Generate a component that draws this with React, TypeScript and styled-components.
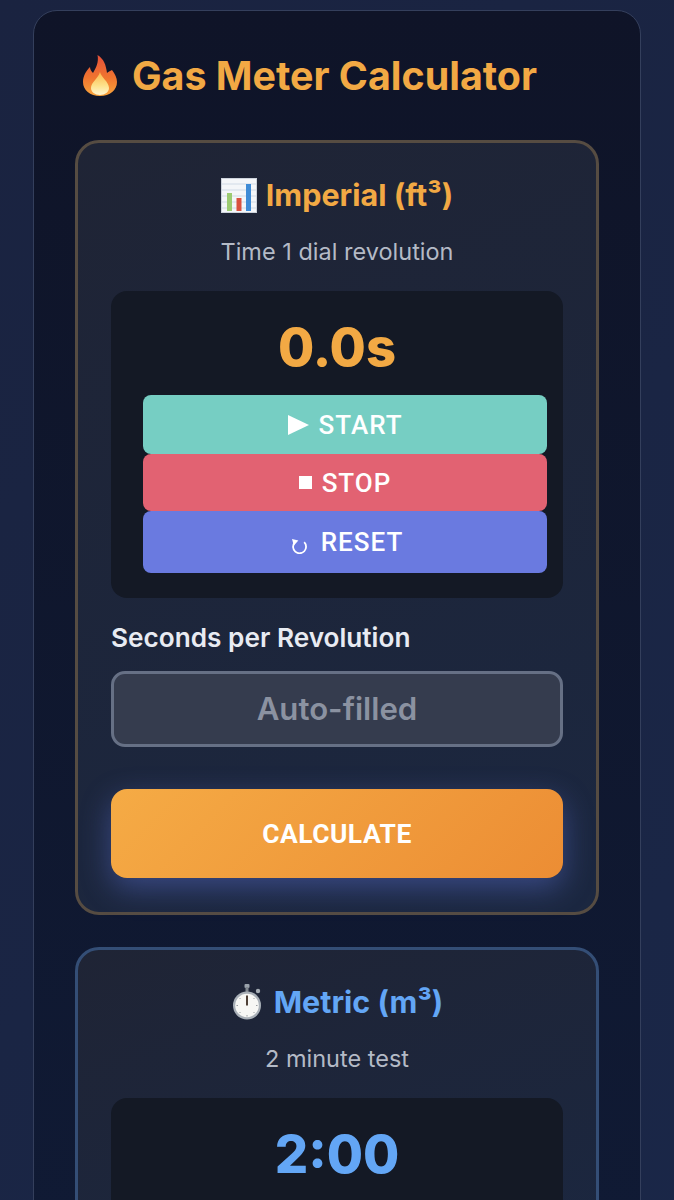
import styled, { createGlobalStyle } from "styled-components";

const GlobalStyle = createGlobalStyle`
  * { box-sizing: border-box; }
  html, body { margin: 0; padding: 0; background: #1a2544; }
  body { font-family: Inter, "Liberation Sans", sans-serif; }
  #root { height: 1200px; overflow: hidden; }
`;

const FireEmoji = () => (
  <svg width="42" height="46" viewBox="0 0 42 46">
    <defs>
      <linearGradient id="fireOuter" x1="0" y1="0" x2="0" y2="1">
        <stop offset="0" stopColor="#e4503a" />
        <stop offset="0.55" stopColor="#f0742f" />
        <stop offset="1" stopColor="#f8a53c" />
      </linearGradient>
      <linearGradient id="fireInner" x1="0" y1="0" x2="0" y2="1">
        <stop offset="0" stopColor="#fbb64a" />
        <stop offset="0.6" stopColor="#fde28c" />
        <stop offset="1" stopColor="#fff6d2" />
      </linearGradient>
    </defs>
    <path d="M20.5 2C27 6 29 12 30 20C31 19 33 18 35 17C38 21 40 25 40 29C40 37 33 43 23 43C13 43 6 37 6 29C6 23 9 18 13 14C13 16 14 18 16 20C19 15 22 9 20.5 2z" fill="url(#fireOuter)" />
    <path d="M23 19C24 24 32 29 32 35C32 39 28 42 23 42C18 42 14 39 14 35C14 29 21 26 23 19z" fill="url(#fireInner)" />
  </svg>
);

const ChartEmoji = () => (
  <svg width="36" height="35" viewBox="0 0 36 35">
    <rect x="0.5" y="0.5" width="35" height="34" fill="#f4f6f9" stroke="#cdd3dc" />
    <path d="M1 6h34M1 12h34M1 18h34M1 24h34M1 30h34" stroke="#d0dae6" strokeWidth="1" />
    <rect x="6" y="15" width="5" height="18" fill="#9ccb72" />
    <rect x="15.5" y="20" width="5" height="13" fill="#d9503f" />
    <rect x="25" y="6" width="5" height="27" fill="#3f8bd6" />
  </svg>
);

const WatchEmoji = () => (
  <svg width="32" height="36" viewBox="0 0 32 36">
    <rect x="13.5" y="0" width="5" height="4" rx="1" fill="#9aa2ab" />
    <rect x="14.5" y="3" width="3" height="5" fill="#80878f" />
    <circle cx="27" cy="7" r="2.2" fill="#a5acb4" />
    <circle cx="16" cy="21.5" r="14" fill="#a9b0b8" />
    <circle cx="16" cy="21.5" r="11.8" fill="#f7f7f5" />
    <path d="M16 11.5v10" stroke="#4f4037" strokeWidth="2" />
    <path d="M16 31v1.5M5.5 21.5h1.5M25 21.5h1.5M8.5 14l1 1M22.5 28l1 1M23.5 14l-1 1M9.5 28l-1 1" stroke="#8d9299" strokeWidth="0.9" />
  </svg>
);

const PlayIcon = () => (
  <svg width="21" height="20" viewBox="0 0 21 20">
    <path d="M0 0l21 10L0 20z" fill="#fff" />
  </svg>
);

const StopIcon = () => (
  <svg width="13" height="13" viewBox="0 0 13 13">
    <rect width="13" height="13" fill="#fff" />
  </svg>
);

const ResetIcon = () => (
  <ResetSvg width="17" height="16" viewBox="0 0 17 16">
    <path d="M3.6 4.6a6.5 6.5 0 1 0 9.6-.4" fill="none" stroke="#fff" strokeWidth="1.8" />
    <path d="M1 1l6.4 1.6L2.8 7.4z" fill="#fff" />
  </ResetSvg>
);

const App = () => (
  <Page>
    <GlobalStyle />
    <Shell>
      <Heading>
        <FireEmoji />
        Gas Meter Calculator
      </Heading>

      <Section $border="#564c42">
        <SectionTitle $color="#f2a944" $gap={9}>
          <ChartEmoji />
          Imperial (ft³)
        </SectionTitle>
        <Hint>Time 1 dial revolution</Hint>
        <TimerBox>
          <TimerValue $color="#f2a944">0.0s</TimerValue>
          <ButtonStack>
            <TimerButton $bg="#76cec3" $height={59} $gap={10}><PlayIcon />START</TimerButton>
            <TimerButton $bg="#e26272" $height={57} $gap={10}><StopIcon />STOP</TimerButton>
            <TimerButton $bg="#6a7ae0" $height={62} $gap={13} $offset={4}><ResetIcon />RESET</TimerButton>
          </ButtonStack>
        </TimerBox>
        <FieldLabel>Seconds per Revolution</FieldLabel>
        <AutoInput readOnly placeholder="Auto-filled" />
        <CalcButton>CALCULATE</CalcButton>
      </Section>

      <Section $border="#344e76">
        <SectionTitle $color="#63a6f5" $gap={11}>
          <WatchEmoji />
          Metric (m³)
        </SectionTitle>
        <Hint>2 minute test</Hint>
        <TimerBox>
          <TimerValue $color="#63a6f5">2:00</TimerValue>
        </TimerBox>
      </Section>
    </Shell>
  </Page>
);

export default App;

const Page = styled.div`
  min-height: 1200px;
  padding: 10px 33px 0;
  background: linear-gradient(135deg, #1a2340 0%, #1a2748 100%);
`;

const Shell = styled.main`
  height: 1400px;
  padding: 41px 41px 0;
  border: 1px solid #343f5c;
  border-radius: 24px;
  background: linear-gradient(180deg, #0f1428 0%, #101b36 100%);
`;

const Heading = styled.h1`
  display: flex;
  align-items: center;
  gap: 13px;
  height: 48px;
  margin: 0 0 40px 2px;
  color: #f2a944;
  font-size: 39.4px;
  font-weight: 700;
  line-height: 48px;
  white-space: nowrap;
`;

const Section = styled.section<{ $border: string }>`
  margin-bottom: 32px;
  padding: 32px 33px 34px;
  border: 3px solid ${(p) => p.$border};
  border-radius: 24px;
  background: linear-gradient(160deg, #1f2435 0%, #1b2740 100%);
`;

const SectionTitle = styled.h2<{ $color: string; $gap: number }>`
  display: flex;
  align-items: center;
  justify-content: center;
  gap: ${(p) => p.$gap}px;
  height: 40px;
  margin: 0 0 21px;
  color: ${(p) => p.$color};
  font-size: 30.5px;
  font-weight: 700;
  line-height: 40px;
`;

const Hint = styled.p`
  margin: 0 0 23px;
  color: #b4bac6;
  font-size: 23.5px;
  line-height: 32px;
  text-align: center;
`;

const TimerBox = styled.div`
  padding: 22px 16px 25px;
  border-radius: 16px;
  background: #141925;
`;

const TimerValue = styled.div<{ $color: string }>`
  height: 68px;
  margin-bottom: 14px;
  color: ${(p) => p.$color};
  font-size: 52.5px;
  font-weight: 800;
  line-height: 68px;
  text-align: center;
`;

const ButtonStack = styled.div`
  display: flex;
  flex-direction: column;
  padding-left: 16px;
`;

const TimerButton = styled.button<{ $bg: string; $height: number; $gap: number; $offset?: number }>`
  display: flex;
  align-items: center;
  justify-content: center;
  gap: ${(p) => p.$gap}px;
  height: ${(p) => p.$height}px;
  padding: 0 0 0 ${(p) => p.$offset ?? 0}px;
  border: 0;
  border-radius: 8px;
  background: ${(p) => p.$bg};
  color: #fff;
  font-family: Roboto, "Liberation Sans", sans-serif;
  font-size: 26px;
  font-weight: 500;
  letter-spacing: 1px;
`;

const ResetSvg = styled.svg`
  margin-top: 8px;
`;

const FieldLabel = styled.label`
  display: block;
  margin: 24px 0 17px;
  color: #e8ebf2;
  font-size: 26.2px;
  font-weight: 600;
  line-height: 32px;
`;

const AutoInput = styled.input`
  display: block;
  width: 100%;
  height: 76px;
  margin-bottom: 42px;
  border: 3px solid #667085;
  border-radius: 14px;
  background: #353c4e;
  color: #fff;
  font-family: Inter, "Liberation Sans", sans-serif;
  font-size: 31.2px;
  font-weight: 600;
  text-align: center;
  outline: none;

  &::placeholder {
    color: #8b92a1;
    opacity: 1;
  }
`;

const CalcButton = styled.button`
  display: block;
  width: 100%;
  height: 89px;
  border: 0;
  border-radius: 16px;
  background: linear-gradient(135deg, #f5ab45 0%, #ec8d34 100%);
  box-shadow: 0 10px 30px rgba(102, 126, 234, 0.4);
  color: #fff;
  font-family: Roboto, "Liberation Sans", sans-serif;
  font-size: 26.4px;
  font-weight: 700;
  letter-spacing: 0.5px;
`;
